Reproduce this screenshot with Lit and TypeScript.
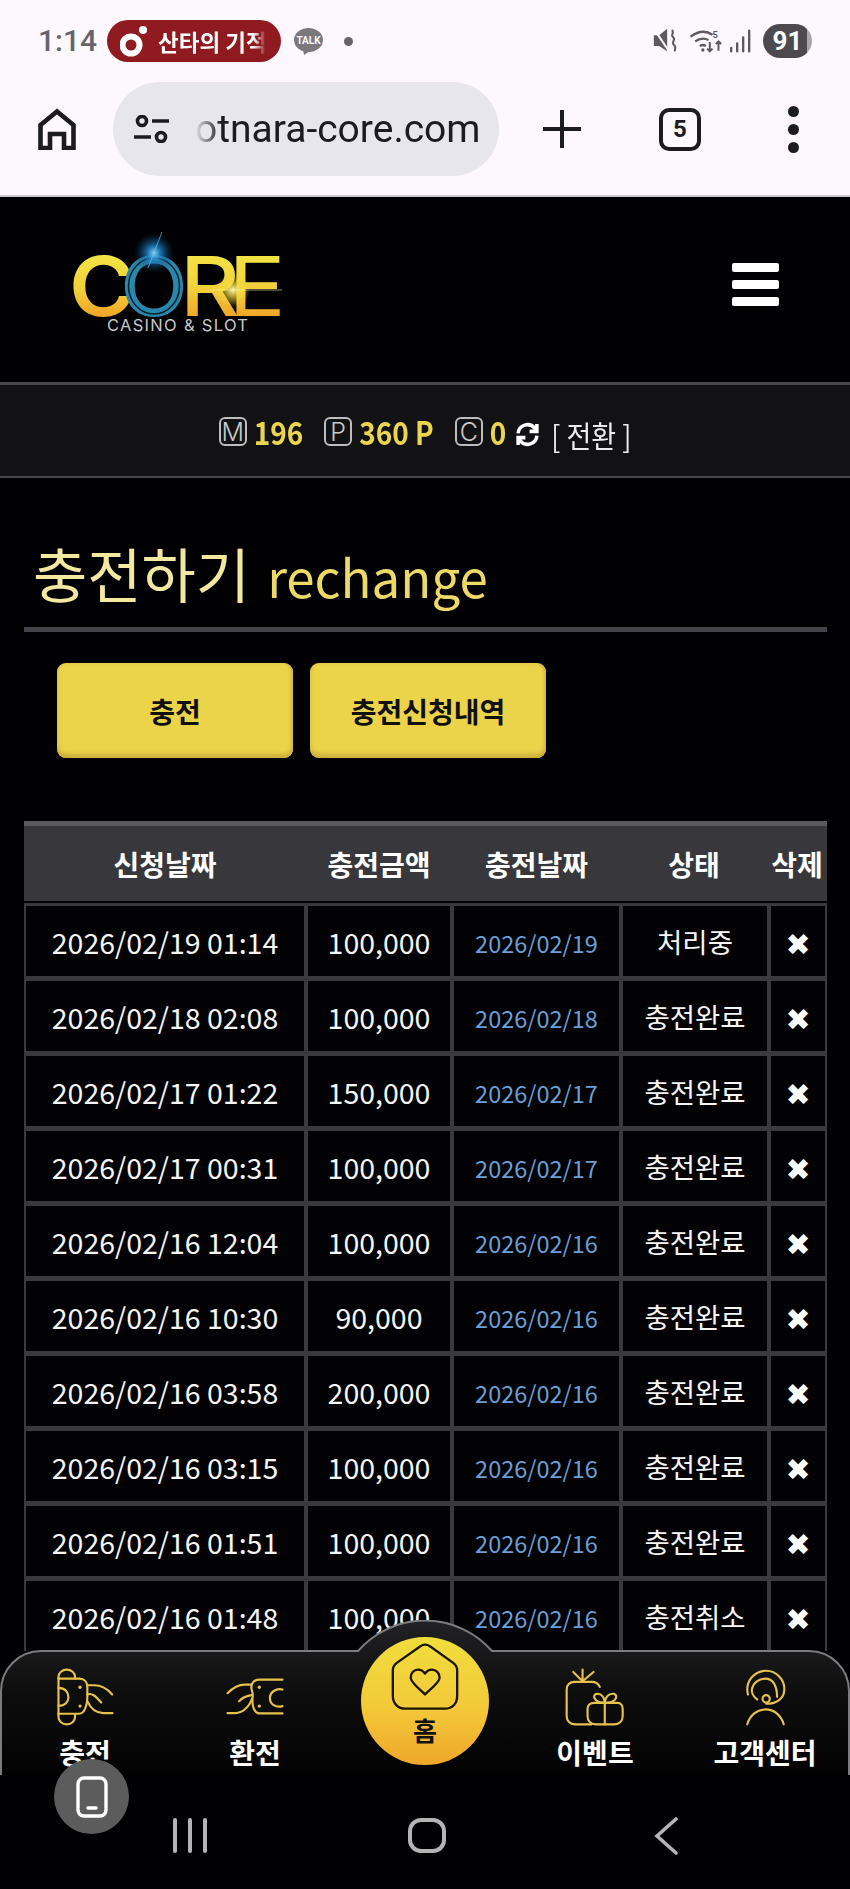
import { LitElement, html, css, svg } from "lit";
import { customElement } from "lit/decorators.js";

const ROWS: [string, string, string, string][] = [
  ["2026/02/19 01:14", "100,000", "2026/02/19", "처리중"],
  ["2026/02/18 02:08", "100,000", "2026/02/18", "충전완료"],
  ["2026/02/17 01:22", "150,000", "2026/02/17", "충전완료"],
  ["2026/02/17 00:31", "100,000", "2026/02/17", "충전완료"],
  ["2026/02/16 12:04", "100,000", "2026/02/16", "충전완료"],
  ["2026/02/16 10:30", "90,000", "2026/02/16", "충전완료"],
  ["2026/02/16 03:58", "200,000", "2026/02/16", "충전완료"],
  ["2026/02/16 03:15", "100,000", "2026/02/16", "충전완료"],
  ["2026/02/16 01:51", "100,000", "2026/02/16", "충전완료"],
  ["2026/02/16 01:48", "100,000", "2026/02/16", "충전취소"],
];

const logo = html`<svg class="logo" width="240" height="110" viewBox="0 0 240 110">
  <defs>
    <linearGradient id="gold" gradientUnits="userSpaceOnUse" x1="0" y1="27" x2="0" y2="90">
      <stop offset="0" stop-color="#f3e444" /><stop offset="0.55" stop-color="#f2cf3a" /><stop offset="1" stop-color="#f0a226" />
    </linearGradient>
    <radialGradient id="blueGlow"><stop offset="0" stop-color="#7fd4ff" /><stop offset="0.35" stop-color="#1f86c8" stop-opacity="0.8" /><stop offset="1" stop-color="#0a3a66" stop-opacity="0" /></radialGradient>
    <radialGradient id="yellowGlow"><stop offset="0" stop-color="#fff8b0" /><stop offset="0.4" stop-color="#f5dc40" stop-opacity="0.7" /><stop offset="1" stop-color="#f5dc40" stop-opacity="0" /></radialGradient>
  </defs>
  <text class="lg" x="9" y="88" font-size="83" textLength="66" lengthAdjust="spacingAndGlyphs" fill="url(#gold)">C</text>
  <text class="lg thin" x="120" y="88" font-size="83" textLength="60" lengthAdjust="spacingAndGlyphs" fill="url(#gold)">R</text>
  <text class="lg light" x="168" y="88" font-size="83" textLength="58" lengthAdjust="spacingAndGlyphs" fill="url(#gold)">E</text>
  <text class="lg ring" x="60" y="88" font-size="83" textLength="68" lengthAdjust="spacingAndGlyphs" fill="#2a86aa">O</text>
  <ellipse cx="94" cy="58" rx="25.5" ry="28" fill="none" stroke="#06222e" stroke-width="1.5" />
  <circle cx="94" cy="25" r="20" fill="url(#blueGlow)" />
  <line x1="102" y1="4" x2="88" y2="40" stroke="#6fc4f0" stroke-width="1" opacity="0.7" />
  <circle cx="173" cy="62" r="17" fill="url(#yellowGlow)" />
  <line x1="150" y1="62" x2="222" y2="62" stroke="#fff6a0" stroke-width="1" opacity="0.6" />
  <text class="lgsub" x="47" y="103" font-size="16.5" textLength="141" fill="#c8c8c8">CASINO &amp; SLOT</text>
</svg>`;

const sysIcons = html`<svg width="102" height="30" viewBox="35 30 305 90" fill="none" stroke="#5c5a60">
  <path d="M40 58h16l24-20v68l-24-16H40z" fill="#5c5a60" stroke="none" />
  <path d="M40 38l44 66" stroke-width="6" stroke="#fcf8fd" />
  <path d="M94 42c10 8-6 14 4 22s-8 14 2 22 0 12 4 20" stroke-width="6" />
  <path d="M150 62c24-18 48-18 66-6M164 76c14-10 28-10 40-4M178 90c6-4 12-4 18 0" stroke-width="7" />
  <circle cx="187" cy="102" r="5" fill="#5c5a60" stroke="none" />
  <text x="216" y="66" font-size="28" font-weight="700" fill="#5c5a60" stroke="none" font-family="Roboto, sans-serif">5</text>
  <path d="M208 78v28M200 98l8 8 8-8M234 104V76M226 84l8-8 8 8" stroke-width="6" />
  <path d="M272 96v10M290 82v24M308 64v42M326 44v62" stroke-width="7" stroke-linecap="round" />
</svg>`;

const ic = (vb: string, w: number, h: number, body: unknown) =>
  html`<svg class="ic" width=${w} height=${h} viewBox=${vb} fill="none" stroke="#e6c24c" stroke-width="6.5" stroke-linecap="round" stroke-linejoin="round">${body}</svg>`;

const chargeIcon = ic("15 20 180 175", 60, 58, svg`
  <path d="M25 52V47a25 22 0 0 1 50 0v5" />
  <path d="M25 160v8a25 22 0 0 0 50 0v-8" />
  <path d="M25 52V160" />
  <path d="M25 52H88c15 0 24 10 24 25v8c0 10 0 18 0 25 0 25-10 48-24 48H25" />
  <path d="M112 72h20c25 0 42 12 55 28" />
  <path d="M112 120c10 22 28 36 48 36h28" />
  <path d="M112 100c14-6 26 6 42 24" />
  <path d="M25 80c20 0 30 14 30 28s-10 26-30 26" />
  <circle cx="90" cy="78" r="5" fill="#e6c24c" stroke="none" />
  <circle cx="90" cy="135" r="5" fill="#e6c24c" stroke="none" />
`);

const exchangeIcon = ic("525 20 180 175", 60, 58, svg`
  <path d="M698 55H628c-15 0-24 10-24 22 0 12 6 18 4 30-2 18 0 50 22 50h68" />
  <path d="M604 70h-20c-25 0-40 14-52 26" />
  <path d="M532 156h24c20 0 42-18 50-44" />
  <path d="M567 120c10-10 20-16 38-18" />
  <path d="M698 85c-20-5-38 8-38 26s18 30 38 24" />
  <circle cx="628" cy="78" r="5" fill="#e6c24c" stroke="none" />
  <circle cx="628" cy="135" r="5" fill="#e6c24c" stroke="none" />
`);

const giftIcon = ic("45 20 185 178", 62, 59, svg`
  <path d="M152 77c-5-12-12-15-25-15H75c-14 0-23 10-23 22v81c0 14 10 25 25 25h50" />
  <path d="M100 60L72 32M100 60V25M100 60l33-28" />
  <path d="M135 125h70c12 0 16 10 16 18v22c0 15-10 25-25 25h-56c-15 0-25-10-25-25v-22c0-10 8-18 20-18z" />
  <path d="M167 125v65" />
  <path d="M167 125c-35 0-38-25-25-27 15-3 25 12 25 27 0-15 12-30 28-27 12 3 10 27-28 27z" />
`);

const supportIcon = ic("580 20 130 178", 43, 59, svg`
  <path d="M592 100c-10-40 20-72 55-72 32 0 55 28 55 55 0 28-22 45-55 45" />
  <path d="M620 115c-15-10-18-25-15-35 5-18 22-28 40-28 20 0 35 18 35 55" />
  <circle cx="647" cy="113" r="11" />
  <path d="M590 190c8-28 30-45 55-45s47 17 55 45" />
`);

@customElement("app-root")
export class AppRoot extends LitElement {
  static styles = css`
    :host {
      display: block;
      position: relative;
      width: 850px;
      height: 1889px;
      overflow: hidden;
      background: #010103;
      font-family: "Noto Sans CJK KR", "Noto Sans", sans-serif;
      color: #f4f4f4;
    }
    .browser {
      height: 195px;
      background: #fcf8fd;
      border-bottom: 2px solid #c9c6cc;
      display: flex;
      flex-direction: column;
    }
    .status {
      height: 82px;
      display: flex;
      align-items: center;
      padding-left: 38px;
      box-sizing: border-box;
    }
    .time {
      font-family: Roboto, sans-serif;
      font-weight: 500;
      font-size: 30px;
      color: #66646a;
      width: 69px;
      margin-top: -2px;
    }
    .red {
      width: 174px;
      height: 42px;
      border-radius: 21px;
      background: #8f1a20;
      display: flex;
      align-items: center;
      overflow: hidden;
      box-sizing: border-box;
      padding-left: 13px;
      margin-top: -1px;
      gap: 10px;
      flex: none;
    }
    .red-text {
      width: 108px;
      overflow: hidden;
      white-space: nowrap;
      color: #fff;
      font-weight: 700;
      font-size: 22.5px;
      -webkit-mask-image: linear-gradient(90deg, #000 88%, transparent);
      mask-image: linear-gradient(90deg, #000 88%, transparent);
    }
    .talk { margin-left: 13px; flex: none; }
    .dot {
      width: 9px;
      height: 9px;
      border-radius: 50%;
      background: #66646a;
      margin-left: 21px;
    }
    .sys { margin-left: auto; display: flex; align-items: center; gap: 9px; padding-right: 38px; }
    .batt {
      width: 49px;
      height: 34px;
      border-radius: 17px;
      background: linear-gradient(90deg, #4c4a4f 90%, #a9a7ac 90%);
      color: #fff;
      font-family: Roboto, sans-serif;
      font-weight: 700;
      font-size: 26px;
      display: flex;
      align-items: center;
      justify-content: center;
    }
    .toolbar {
      height: 94px;
      display: flex;
      align-items: center;
      padding-left: 38px;
    }
    .pill {
      width: 386px;
      height: 94px;
      border-radius: 47px;
      background: #e7e6ec;
      margin: 0 44px 0 37px;
      display: flex;
      align-items: center;
      padding-left: 21px;
      box-sizing: border-box;
      gap: 26px;
      flex: none;
    }
    .url {
      font-family: Roboto, sans-serif;
      font-size: 39px;
      color: #1b1b20;
      white-space: nowrap;
      -webkit-mask-image: linear-gradient(90deg, transparent, #000 26px);
      mask-image: linear-gradient(90deg, transparent, #000 26px);
    }
    .tabs {
      width: 34px;
      height: 35px;
      border: 4px solid #1b1b20;
      border-radius: 10px;
      margin-left: 78px;
      display: flex;
      align-items: center;
      justify-content: center;
      font: 700 24px Roboto, sans-serif;
      color: #1b1b20;
      flex: none;
    }
    .kebab { margin-left: 87px; display: flex; flex-direction: column; gap: 7px; }
    .kebab i { width: 11px; height: 11px; border-radius: 50%; background: #1b1b20; display: block; }

    .head {
      height: 185px;
      box-sizing: border-box;
      display: flex;
      justify-content: space-between;
      align-items: flex-start;
      padding: 31px 71px 0 60px;
    }
    .lg { font-family: Inter, sans-serif; font-weight: 600; }
    .thin { font-weight: 500; }
    .light { font-weight: 400; }
    .ring { font-weight: 500; }
    .lgsub { font-family: Inter, sans-serif; font-weight: 400; }
    .burger { display: flex; flex-direction: column; gap: 8px; margin-top: 35px; }
    .burger i { display: block; width: 47px; height: 9px; border-radius: 2px; background: #fff; }

    .bar {
      height: 96px;
      box-sizing: border-box;
      background: #121214;
      border-top: 3px solid #48484b;
      border-bottom: 2px solid #48484b;
      display: flex;
      justify-content: center;
      align-items: center;
      padding-bottom: 4px;
    }
    .bx {
      width: 24px;
      height: 25px;
      border: 2px solid #bdbdbd;
      border-radius: 6px;
      display: flex;
      align-items: center;
      justify-content: center;
      font: 300 25px Inter, sans-serif;
      color: #c9c9c9;
      margin-right: 7px;
      margin-top: 6px;
    }
    .val {
      font-weight: 700;
      font-size: 28px;
      color: #ebd54f;
      line-height: 1;
      margin-right: 21px;
      margin-top: 4px;
      transform: scaleY(1.15);
    }
    .val.zero { margin-right: 9px; }
    .swap { margin-top: 12px; margin-right: 11px; }
    .chg {
      font-size: 27px;
      color: #ececec;
      line-height: 1;
      margin-top: 14px;
      white-space: pre;
      transform: scaleY(1.12);
    }

    .title {
      height: 149px;
      margin: 0 23px 0 24px;
      box-sizing: border-box;
      display: flex;
      align-items: baseline;
      padding: 65px 0 0 9px;
      line-height: 1;
    }
    .title b { font-weight: 400; font-size: 59px; color: #f2e8a0; margin-right: 17px; }
    .title span { font-size: 51px; color: #ecd968; }
    .rule { height: 5px; background: #444349; margin: 0 23px 0 24px; }

    .btns { display: flex; gap: 17px; padding: 31px 0 0 57px; }
    .btn {
      width: 236px;
      height: 95px;
      box-sizing: border-box;
      border-radius: 9px;
      background: #ebd44a;
      box-shadow: inset 0 -4px 4px #cdae3e, inset -2px 0 3px #d9bd42;
      color: #111;
      font-weight: 700;
      font-size: 28px;
      display: flex;
      align-items: center;
      justify-content: center;
    }

    .table { margin: 63px 23px 0 24px; }
    .thead {
      height: 80px;
      box-sizing: border-box;
      background: #38383c;
      border-top: 5px solid #5a5a5d;
      display: grid;
      grid-template-columns: 280px 148px 167px 148px 58px;
      align-items: center;
      text-align: center;
      font-weight: 700;
      font-size: 28px;
      color: #fff;
      padding-left: 1px;
    }
    .rows {
      margin-top: 2px;
      background: #3a3a3e;
      padding: 3px 2px 0;
      display: flex;
      flex-direction: column;
      gap: 5px;
    }
    .row {
      display: grid;
      grid-template-columns: 278px 142px 165px 144px 54px;
      gap: 4px;
      height: 70px;
    }
    .cell {
      background: #020204;
      display: flex;
      align-items: center;
      justify-content: center;
      font-size: 28.5px;
      color: #f6f6f6;
      white-space: nowrap;
    }
    .cell.st { font-size: 27.5px; }
    .cell.dt { font-size: 23.5px; color: #6a9fd8; padding-top: 4px; box-sizing: border-box; }
    .cell.x { font: 700 30px "DejaVu Sans", sans-serif; color: #fff; padding-top: 7px; box-sizing: border-box; }

    .nav {
      position: absolute;
      left: 0;
      top: 1620px;
      width: 850px;
      height: 155px;
      display: grid;
      grid-template-columns: repeat(5, 170px);
    }
    .navbg { position: absolute; left: 0; top: 0; }
    .item {
      position: relative;
      display: flex;
      flex-direction: column;
      align-items: center;
      padding-top: 48px;
      height: 155px;
      box-sizing: border-box;
    }
    .icbox { height: 58px; display: flex; align-items: center; justify-content: center; }
    .lab { font-weight: 700; font-size: 28px; color: #fff; line-height: 1; margin-top: 12px; white-space: nowrap; }
    .home {
      position: relative;
      width: 128px;
      height: 128px;
      border-radius: 50%;
      margin: 17px auto 0;
      background: linear-gradient(180deg, #f0de3c 0%, #f3c93a 55%, #f0a72a 100%);
      display: flex;
      flex-direction: column;
      align-items: center;
      padding-top: 6px;
      box-sizing: border-box;
      color: #111;
      font-weight: 700;
      font-size: 26px;
      line-height: 1;
    }
    .home span { margin-top: 6px; }

    .sysnav {
      position: absolute;
      left: 0;
      top: 1775px;
      width: 850px;
      height: 114px;
      box-sizing: border-box;
      padding: 43px 0 0 173px;
      display: flex;
      align-items: flex-start;
    }
    .recents { display: flex; gap: 11px; }
    .recents i { display: block; width: 4px; height: 35px; border-radius: 2px; background: #b4b4b4; }
    .square { width: 38px; height: 35px; box-sizing: border-box; border: 4px solid #b4b4b4; border-radius: 13px; margin-left: 201px; }
    .back { margin-left: 208px; margin-top: -1px; }

    .float {
      position: absolute;
      left: 54px;
      top: 1759px;
      width: 75px;
      height: 75px;
      border-radius: 50%;
      background: #5c5c5c;
      display: flex;
      align-items: center;
      justify-content: center;
    }
  `;

  render() {
    return html`
      <div class="browser">
        <div class="status">
          <span class="time">1:14</span>
          <div class="red">
            <svg width="28" height="34" viewBox="0 0 28 34" fill="none">
              <circle cx="11" cy="21" r="8.5" stroke="#fff" stroke-width="6" />
              <circle cx="23" cy="6" r="4" fill="#fff" />
            </svg>
            <span class="red-text">산타의 기적</span>
          </div>
          <svg class="talk" width="29" height="27" viewBox="0 0 29 27">
            <ellipse cx="14.5" cy="12" rx="14.5" ry="12" fill="#7a787d" />
            <path d="M9 21l1 6 6-4z" fill="#7a787d" />
            <text x="14.5" y="16" text-anchor="middle" font-size="10" font-weight="700" font-family="Roboto, sans-serif" fill="#fcf8fd">TALK</text>
          </svg>
          <span class="dot"></span>
          <div class="sys">${sysIcons}<span class="batt">91</span></div>
        </div>
        <div class="toolbar">
          <svg width="38" height="42" viewBox="0 0 38 42" fill="none" stroke="#1b1b20" stroke-width="4.6" stroke-linejoin="miter" style="flex:none">
            <path d="M2.5 40V17L19 3.5 35.5 17v23H26V26H12v14z" />
          </svg>
          <div class="pill">
            <svg width="35" height="28" viewBox="0 0 35 28" fill="none" stroke="#1b1b20" stroke-width="3.6" style="flex:none">
              <circle cx="8" cy="6" r="4.5" /><path d="M18 6h17M0 22h17" /><circle cx="27" cy="22" r="4.5" />
            </svg>
            <span class="url">otnara-core.com</span>
          </div>
          <svg width="38" height="38" viewBox="0 0 38 38" stroke="#1b1b20" stroke-width="4" style="flex:none"><path d="M19 0v38M0 19h38" /></svg>
          <div class="tabs">5</div>
          <div class="kebab"><i></i><i></i><i></i></div>
        </div>
      </div>

      <div class="head">
        ${logo}
        <div class="burger"><i></i><i></i><i></i></div>
      </div>

      <div class="bar">
        <span class="bx">M</span><span class="val">196</span>
        <span class="bx">P</span><span class="val">360 P</span>
        <span class="bx">C</span><span class="val zero">0</span>
        <svg class="swap" width="25" height="25" viewBox="0 0 24 24" fill="none" stroke="#fff" stroke-width="3.4">
          <path d="M3 11a9 9 0 0 1 16-5l2 2M21 2v7h-7M21 13a9 9 0 0 1-16 5l-2-2M3 22v-7h7" />
        </svg>
        <span class="chg">[ 전환 ]</span>
      </div>

      <div class="title"><b>충전하기</b><span>rechange</span></div>
      <div class="rule"></div>

      <div class="btns">
        <div class="btn">충전</div>
        <div class="btn">충전신청내역</div>
      </div>

      <div class="table">
        <div class="thead">
          <span>신청날짜</span><span>충전금액</span><span>충전날짜</span><span>상태</span><span>삭제</span>
        </div>
        <div class="rows">
          ${ROWS.map(
            (r) => html`<div class="row">
              <div class="cell">${r[0]}</div>
              <div class="cell">${r[1]}</div>
              <div class="cell dt">${r[2]}</div>
              <div class="cell st">${r[3]}</div>
              <div class="cell x">✖</div>
            </div>`
          )}
        </div>
      </div>

      <div class="nav">
        <svg class="navbg" width="850" height="155" viewBox="0 0 850 155">
          <defs>
            <linearGradient id="navg" x1="0" y1="0" x2="0" y2="1">
              <stop offset="0" stop-color="#222224" /><stop offset="0.45" stop-color="#0e0e0f" /><stop offset="1" stop-color="#020203" />
            </linearGradient>
          </defs>
          <path d="M1 155V71A40 40 0 0 1 41 31H358A89 89 0 0 1 492 31H809A40 40 0 0 1 849 71V155" fill="url(#navg)" stroke="#7c7c7e" stroke-width="2" />
        </svg>
        <div class="item"><div class="icbox">${chargeIcon}</div><span class="lab">충전</span></div>
        <div class="item"><div class="icbox">${exchangeIcon}</div><span class="lab">환전</span></div>
        <div class="home-wrap">
          <div class="home">
            <svg width="70" height="68" viewBox="120 100 210 205" fill="none" stroke="#1a1400" stroke-width="7" stroke-linejoin="round">
              <path d="M225 105c-5 0-10 2-14 5L140 160c-8 6-12 12-12 22v78c0 22 15 38 38 38h119c22 0 37-15 37-38v-78c0-10-4-16-12-22l-70-50c-4-3-10-5-15-5z" />
              <path d="M225 255c-15-15-43-35-43-50 0-15 10-25 22-25 9 0 16 5 21 12 5-7 12-12 21-12 12 0 23 10 23 25 0 15-29 35-44 50z" />
            </svg>
            <span>홈</span>
          </div>
        </div>
        <div class="item"><div class="icbox">${giftIcon}</div><span class="lab">이벤트</span></div>
        <div class="item"><div class="icbox">${supportIcon}</div><span class="lab">고객센터</span></div>
      </div>

      <div class="sysnav">
        <div class="recents"><i></i><i></i><i></i></div>
        <div class="square"></div>
        <svg class="back" width="24" height="38" viewBox="0 0 24 38" fill="none" stroke="#b4b4b4" stroke-width="3.6" stroke-linecap="round"><path d="M22 2L3 19l19 17" /></svg>
      </div>

      <div class="float">
        <svg width="32" height="42" viewBox="0 0 32 42" fill="none" stroke="#fff" stroke-width="3.4">
          <rect x="2" y="2" width="28" height="38" rx="6" />
          <path d="M12 32h8" stroke-linecap="round" />
        </svg>
      </div>
    `;
  }
}
